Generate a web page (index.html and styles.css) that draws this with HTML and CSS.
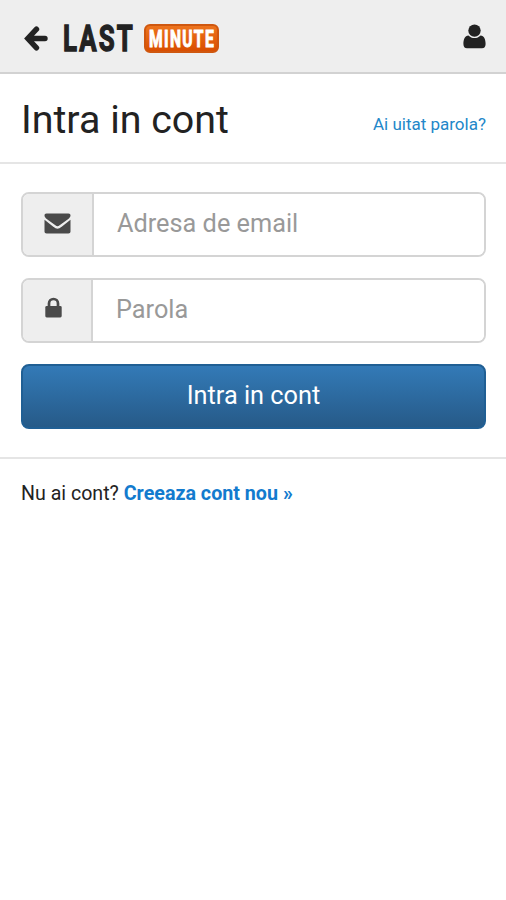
FILE: index.html
```html
<!DOCTYPE html>
<html lang="ro">
<head>
<meta charset="utf-8">
<title>Intra in cont</title>
<link rel="stylesheet" href="styles.css">
</head>
<body>
<header class="topbar">
  <a class="brand">
    <svg class="back" width="24" height="25" viewBox="0 0 24 25"><path d="M12.500 3.200 3.800 12.500l8.700 9.300M5 12.500h16" fill="none" stroke="#222" stroke-width="5.400" stroke-linecap="round"/></svg>
    <svg class="wordmark" width="80" height="48" viewBox="0 0 80 48"><text x="1" y="37" textLength="72" lengthAdjust="spacingAndGlyphs">LAST</text></svg>
    <span class="badge"><svg width="75" height="34" viewBox="0 0 75 34"><text x="5" y="25.500" textLength="66" lengthAdjust="spacingAndGlyphs">MINUTE</text></svg></span>
  </a>
  <svg class="user" width="23" height="25" viewBox="0 0 23 25"><circle cx="11.500" cy="6.600" r="6.200"/><path d="M5.400 11.500C2 11.500.4 15.200.4 20c0 2.700 1.300 4.300 3.600 4.300h15c2.300 0 3.600-1.600 3.600-4.300 0-4.800-1.600-8.500-5-8.500-1.700 1.700-3.700 2.600-6.100 2.600s-4.400-.9-6.100-2.600Z"/></svg>
</header>
<section class="heading">
  <h1>Intra in cont</h1>
  <a class="forgot">Ai uitat parola?</a>
</section>
<form class="login">
  <label class="field">
    <span class="addon"><svg width="27" height="21" viewBox="0 0 27 21"><path d="M2.500.5h22c1.300 0 2 .8 2 2 0 1.300-1 2.500-2.200 3.500L15.600 12.300c-1.500 1.200-2.700 1.200-4.200 0L2.700 6C1.500 5 .5 3.800.5 2.500c0-1.200.7-2 2-2ZM.5 6.800l8.800 7c3.300 2.500 5.100 2.500 8.400 0l8.800-7v11.700c0 1.300-.8 2-2.200 2H2.700c-1.400 0-2.200-.7-2.200-2Z"/></svg></span>
    <input type="email" placeholder="Adresa de email">
  </label>
  <label class="field password">
    <span class="addon"><svg width="17" height="21" viewBox="0 0 17 21"><path d="M4 10V6.500a4.500 4.500 0 0 1 9 0V10" fill="none" stroke="#4a4a4a" stroke-width="2.700"/><rect x=".3" y="9" width="16.400" height="11.500" rx="1.400"/></svg></span>
    <input type="password" placeholder="Parola">
  </label>
  <button type="button">Intra in cont</button>
</form>
<p class="signup">Nu ai cont? <a>Creeaza cont nou »</a></p>
</body>
</html>
```
FILE: styles.css
```css
* { box-sizing: border-box; }
body { margin: 0; background: #fff; color: #222; font-family: Roboto, "Liberation Sans", sans-serif; }
svg { display: block; }
.topbar { height: 74px; padding: 0 20px 0 24px; background: #eee; border-bottom: 2px solid #d2d2d2; display: flex; align-items: center; justify-content: space-between; }
.brand { display: flex; align-items: center; margin-top: 4px; }
.wordmark { margin-left: 14px; }
.wordmark text { font-size: 36px; font-weight: 700; letter-spacing: 3px; fill: #222; stroke: #222; stroke-width: 1.300px; }
.badge { width: 75px; height: 29px; margin-left: 2px; border: 2px solid #cf570f; border-radius: 6px; background: linear-gradient(#ed731d, #d94e00); display: flex; align-items: center; justify-content: center; }
.badge svg { flex: none; }
.badge text { font-size: 23.500px; font-weight: 700; letter-spacing: 2px; fill: #fff; stroke: #fff; stroke-width: 1px; }
.user { fill: #222; }
.heading { height: 90px; padding: 0 20px 0 21px; border-bottom: 2px solid #e5e5e5; display: flex; align-items: center; justify-content: space-between; }
h1 { margin: 3px 0 0; font-size: 39.400px; font-weight: 400; line-height: 46px; }
.forgot { margin-top: 11px; font-size: 17px; color: #2387c9; }
.login { height: 295px; padding: 28px 20px 0 21px; border-bottom: 2px solid #e5e5e5; display: flex; flex-direction: column; gap: 21px; }
.field { height: 65px; flex: none; display: flex; border: 2px solid #d4d4d4; border-radius: 8px; overflow: hidden; }
.addon { width: 71px; background: #eee; border-right: 2px solid #d4d4d4; display: flex; align-items: center; justify-content: center; }
.addon svg { fill: #4a4a4a; margin-top: -3px; }
input { flex: 1; min-width: 0; padding: 0 22px 2px 23px; border: 0; background: #fff; font: 400 25.300px Roboto, "Liberation Sans", sans-serif; outline: 0; }
input::placeholder { color: #999; opacity: 1; }
.password .addon { width: 70px; padding-right: 7px; }
.password .addon svg { margin-top: -7px; }
button { height: 65px; flex: none; padding: 0 0 3px; border: 2px solid #205f94; border-radius: 8px; background: linear-gradient(#337ab7, #265a88); color: #fff; font: 400 25.300px Roboto, "Liberation Sans", sans-serif; }
.signup { margin: 23px 21px; font-size: 19.600px; line-height: 24px; }
.signup a { color: #137bce; font-weight: 700; font-size: 19.700px; }
```
